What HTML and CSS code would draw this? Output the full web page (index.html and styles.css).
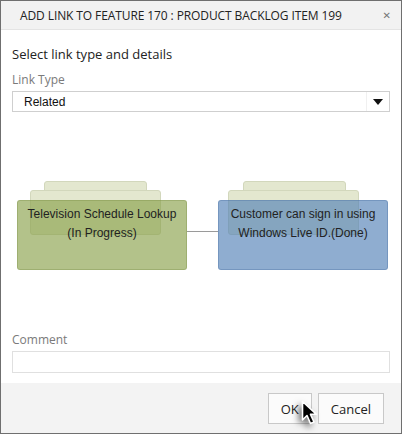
FILE: index.html
```html
<!DOCTYPE html>
<html>
<head>
<meta charset="utf-8">
<link rel="stylesheet" href="styles.css">
</head>
<body>
<div class="dialog">
  <div class="header">
    <span class="title">ADD LINK TO FEATURE 170 : PRODUCT BACKLOG ITEM 199</span>
    <span class="close">&#x2715;</span>
  </div>
  <div class="body">
    <div class="intro">Select link type and details</div>
    <div class="label">Link Type</div>
    <div class="select">
      <span class="select-text">Related</span>
      <span class="select-btn"><svg width="10" height="6" viewBox="0 0 10 6"><path d="M0 0H10L5 6Z" fill="#111"/></svg></span>
    </div>
    <div class="diagram">
      <div class="node green">
        <div class="stack s1"></div>
        <div class="stack s2"></div>
        <div class="card">Television Schedule Lookup<br>(In Progress)</div>
      </div>
      <div class="connector"></div>
      <div class="node blue">
        <div class="stack s1"></div>
        <div class="stack s2"></div>
        <div class="card">Customer can sign in using<br>Windows Live ID.(Done)</div>
      </div>
    </div>
    <div class="label">Comment</div>
    <div class="input"></div>
  </div>
  <div class="footer">
    <button class="btn ok">OK</button>
    <button class="btn">Cancel</button>
    <svg class="cursor" width="20" height="28" viewBox="0 0 20 28">
      <path d="M1.5 1.5 L1.5 20 L6 15.5 L9.5 23.5 L13 22 L9.5 14.3 L15.5 14.3 Z" fill="#000" stroke="#fff" stroke-width="1.6" stroke-linejoin="round"/>
    </svg>
  </div>
</div>
</body>
</html>
```

FILE: styles.css
```css
html, body {
  margin: 0;
  padding: 0;
  background: #fff;
}
.dialog {
  width: 402px;
  height: 434px;
  box-sizing: border-box;
  border: 1px solid #6f6f6f;
  display: flex;
  flex-direction: column;
  font-family: "Open Sans", "Noto Sans", sans-serif;
  color: #222;
  overflow: hidden;
}
.header {
  height: 28px;
  flex: 0 0 28px;
  background: #f2f2f2;
  border-bottom: 1px solid #e4e4e4;
  display: flex;
  align-items: center;
  justify-content: space-between;
  padding: 0 10px 0 19px;
}
.title {
  font-size: 12px;
  color: #222;
  letter-spacing: -0.1px;
}
.close {
  font-size: 10px;
  color: #777;
  font-weight: bold;
  font-family: "DejaVu Sans", sans-serif;
}
.body {
  flex: 1;
  background: #fff;
  padding: 15px 11px 0 11px;
  display: flex;
  flex-direction: column;
}
.intro {
  font-size: 13px;
  line-height: 18px;
  color: #222;
  margin-bottom: 9px;
}
.label {
  font-size: 12px;
  line-height: 16px;
  color: #7a7a7a;
  margin-bottom: 3px;
}
.select {
  height: 21px;
  box-sizing: border-box;
  border: 1px solid #cfcfcf;
  display: flex;
  align-items: center;
  justify-content: space-between;
  font-family: "Liberation Sans", Arial, sans-serif;
  font-size: 12px;
  color: #111;
}
.select-text {
  padding-left: 11px;
}
.select-btn {
  width: 22px;
  height: 100%;
  display: flex;
  align-items: center;
  justify-content: center;
  border-left: 1px solid #f0f0f0;
}
.diagram {
  height: 220px;
  display: flex;
  align-items: center;
  padding: 26px 0 0 5px;
  box-sizing: border-box;
}
.node {
  position: relative;
  width: 170px;
  height: 70px;
}
.stack {
  position: absolute;
  background: #e3e7cf;
  border: 1px solid #d2d7bc;
  border-radius: 3px;
  box-sizing: border-box;
}
.s1 {
  left: 27px;
  width: 103px;
  top: -19px;
  height: 45px;
}
.s2 {
  left: 13px;
  width: 131px;
  top: -10px;
  height: 45px;
}
.green .s1 { left: 27px; }
.blue .s1 { left: 25px; }
.blue .s2 { left: 10px; }
.card {
  position: relative;
  height: 100%;
  box-sizing: border-box;
  border-radius: 3px;
  padding-top: 4px;
  text-align: center;
  font-family: "Liberation Sans", Arial, sans-serif;
  font-size: 12px;
  line-height: 19px;
  color: #222;
}
.green .card {
  background: rgba(138, 161, 75, 0.65);
  border: 1px solid rgba(120, 140, 70, 0.35);
}
.blue .card {
  background: rgba(83, 129, 183, 0.65);
  border: 1px solid rgba(70, 110, 160, 0.35);
}
.connector {
  width: 31px;
  height: 1px;
  background: #9a9a9a;
  margin-bottom: 8px;
}
.input {
  height: 22px;
  box-sizing: border-box;
  border: 1px solid #e0e0e0;
  margin-bottom: 9px;
}
.footer {
  position: relative;
  flex: 0 0 50px;
  background: #f3f3f3;
  display: flex;
  justify-content: flex-end;
  align-items: flex-start;
  gap: 6px;
  padding: 10px 17px 0 0;
  box-sizing: border-box;
}
.btn {
  height: 31px;
  box-sizing: border-box;
  border: 1px solid #c8c8c8;
  background: #fbfbfb;
  font-family: "Open Sans", "Noto Sans", sans-serif;
  font-size: 13px;
  color: #222;
  padding: 0 12px;
  border-radius: 0;
}
.ok {
  width: 44px;
  padding: 0;
}
.cursor {
  position: absolute;
  left: 300px;
  top: 17px;
  filter: drop-shadow(-3px 3px 3px rgba(0,0,0,0.55));
}
```
